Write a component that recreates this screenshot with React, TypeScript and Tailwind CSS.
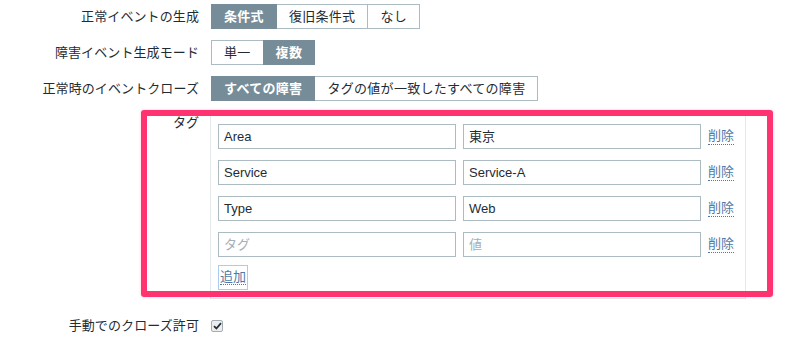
import React from 'react';

const tags = [
  { tag: 'Area', value: '東京' },
  { tag: 'Service', value: 'Service-A' },
  { tag: 'Type', value: 'Web' },
];

function Segmented({ items, active }: { items: string[]; active: number }) {
  return (
    <div className="flex">
      {items.map((item, i) => (
        <span
          key={item}
          className={
            i === active
              ? 'relative z-10 h-[25px] px-3 leading-[23px] tracking-[0.3px] border border-[#768d99] bg-[#768d99] text-white font-bold -ml-px first:ml-0'
              : 'h-[25px] px-3 leading-[23px] tracking-[0.3px] border border-[#acbbc2] bg-white text-[#1f2c33] -ml-px first:ml-0'
          }
        >
          {item}
        </span>
      ))}
    </div>
  );
}

function Row({ label, children }: { label: string; children: React.ReactNode }) {
  return (
    <div className="flex items-center h-[25px]">
      <div className="w-[200px] text-right pr-px tracking-[0.1px]">{label}</div>
      <div className="ml-[11px]">{children}</div>
    </div>
  );
}

function TagInput({ value, placeholder }: { value?: string; placeholder: string }) {
  return (
    <div className="w-[238px] h-[25px] border border-[#acbbc2] bg-white px-[5px] leading-[23px]">
      {value ? <span className="text-[#1f2c33]">{value}</span> : <span className="text-[#a6afb5]">{placeholder}</span>}
    </div>
  );
}

export default function App() {
  return (
    <div className="relative w-[795px] h-[339px] bg-white text-[13px] text-[#1f2c33] font-['Liberation_Sans','Noto_Sans_CJK_JP',sans-serif] pt-1">
      <div className="flex flex-col gap-[11px]">
        <Row label="正常イベントの生成">
          <Segmented items={['条件式', '復旧条件式', 'なし']} active={0} />
        </Row>
        <Row label="障害イベント生成モード">
          <Segmented items={['単一', '複数']} active={1} />
        </Row>
        <Row label="正常時のイベントクローズ">
          <Segmented items={['すべての障害', 'タグの値が一致したすべての障害']} active={0} />
        </Row>

        {/* Tags */}
        <div className="flex">
          <div className="w-[200px] text-right pr-px pt-[3px] leading-[16px]">タグ</div>
          <div className="ml-[10px] w-[536px] border border-[#e4e9ec] pt-[11px] pb-[8px] pl-[7px]">
            <div className="flex flex-col gap-[11px]">
              {tags.map((t) => (
                <div key={t.tag} className="flex items-center gap-[7px]">
                  <TagInput value={t.tag} placeholder="タグ" />
                  <TagInput value={t.value} placeholder="値" />
                  <span className="text-[#4f79a8] leading-[16px] border-b border-dotted border-[#4f79a8]">削除</span>
                </div>
              ))}
              <div className="flex items-center gap-[7px]">
                <TagInput placeholder="タグ" />
                <TagInput placeholder="値" />
                <span className="text-[#4f79a8] leading-[16px] border-b border-dotted border-[#4f79a8]">削除</span>
              </div>
            </div>
            <div className="mt-2 flex">
              <span className="h-[25px] px-px border border-[#a9cdf0] text-[#4f79a8] leading-[21px]">
                <span className="border-b border-dotted border-[#4f79a8]">追加</span>
              </span>
            </div>
          </div>
        </div>

        <div className="flex items-center h-[25px] mt-[3px]">
          <div className="w-[200px] text-right pr-px tracking-[0.1px]">手動でのクローズ許可</div>
          <div className="ml-[11px] w-[12px] h-[12px] border border-[#a3adb3] bg-[#eceff1] rounded-[2px] flex items-center justify-center">
            <svg width="9" height="8" viewBox="0 0 9 8">
              <path d="M1 4.2 L3.4 6.5 L8 1.2" fill="none" stroke="#2a2f33" strokeWidth="1.8" />
            </svg>
          </div>
        </div>
      </div>

      {/* highlight */}
      <div className="absolute left-[141px] top-[110px] w-[632px] h-[187px] border-[6px] border-[#ff3370] rounded-[3px] shadow-[0_0_3px_rgba(255,51,112,0.25)] pointer-events-none" />
    </div>
  );
}
